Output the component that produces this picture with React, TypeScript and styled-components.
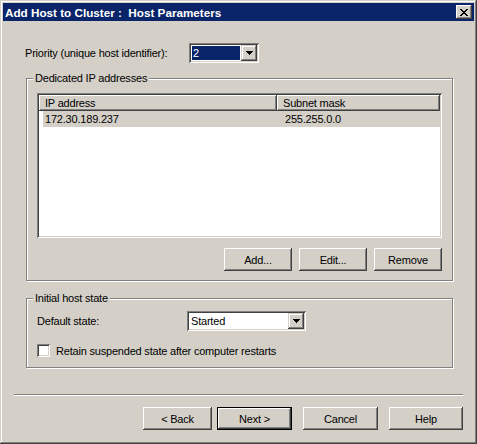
import React from "react";
import styled, { createGlobalStyle, css } from "styled-components";

const face = "#D4D0C8";

const GlobalStyle = createGlobalStyle`
  html, body { margin: 0; padding: 0; background: ${face}; }
  body { font-family: "Liberation Sans", Arial, sans-serif; font-size: 11px; }
`;

const raised = css`
  box-shadow: inset -1px -1px #404040, inset 1px 1px #ffffff, inset -2px -2px #808080, inset 2px 2px ${face};
`;
const arrowRaised = css`
  box-shadow: inset -1px -1px #404040, inset 1px 1px ${face}, inset -2px -2px #808080, inset 2px 2px #ffffff;
`;
const sunken = css`
  box-shadow: inset 1px 1px #808080, inset -1px -1px #ffffff, inset 2px 2px #404040, inset -2px -2px ${face};
`;

const Window = styled.div`
  width: 477px;
  height: 444px;
  box-sizing: border-box;
  padding: 3px;
  background: ${face};
  box-shadow: inset -1px -1px #404040, inset 1px 1px ${face}, inset -2px -2px #808080, inset 2px 2px #ffffff;
  display: flex;
  flex-direction: column;
  color: #000;
  font: 11px "Liberation Sans", Arial, sans-serif;
  letter-spacing: -0.2px;
`;

const TitleBar = styled.div`
  height: 18px;
  flex: none;
  background: #0a246a;
  color: #fff;
  display: flex;
  align-items: center;
  justify-content: space-between;
  padding: 0 2px;
  font-weight: bold;
  font-size: 11.7px;
  letter-spacing: 0;
`;

const TitleText = styled.span`
  white-space: pre;
`;

const CloseButton = styled.div`
  width: 16px;
  height: 14px;
  background: ${face};
  ${raised};
  display: flex;
  align-items: center;
  justify-content: center;
  padding-right: 1px;
  box-sizing: border-box;
`;

const Content = styled.div`
  flex: 1;
  display: flex;
  flex-direction: column;
  padding: 0 11px;
`;

const Row = styled.div<{ $top: number; $indent?: number }>`
  display: flex;
  align-items: center;
  height: 20px;
  margin-top: ${(p) => p.$top}px;
  margin-left: ${(p) => p.$indent ?? 0}px;
`;

const Label = styled.span<{ $width: number }>`
  width: ${(p) => p.$width}px;
  flex: none;
  white-space: nowrap;
`;

const Combo = styled.div<{ $width: number }>`
  width: ${(p) => p.$width}px;
  height: 20px;
  box-sizing: border-box;
  padding: 2px;
  background: #fff;
  ${sunken};
  display: flex;
`;

const ComboField = styled.div<{ $selected?: boolean }>`
  flex: 1;
  margin: 1px;
  padding-left: 1px;
  display: flex;
  align-items: center;
  background: ${(p) => (p.$selected ? "#0a246a" : "#fff")};
  color: ${(p) => (p.$selected ? "#fff" : "#000")};
`;

const ComboArrow = styled.div`
  width: 16px;
  height: 16px;
  background: ${face};
  ${arrowRaised};
  display: flex;
  align-items: center;
  justify-content: center;
`;

const GroupBox = styled.div<{ $top: number; $pad: string }>`
  position: relative;
  margin: ${(p) => p.$top}px 10px 0 12px;
  border: 1px solid #808080;
  box-shadow: inset 1px 1px #ffffff, 1px 1px #ffffff;
  padding: ${(p) => p.$pad};
  display: flex;
  flex-direction: column;
`;

const Legend = styled.span`
  position: absolute;
  top: -7px;
  left: 6px;
  padding: 0 2px;
  line-height: 13px;
  background: ${face};
  white-space: nowrap;
`;

const ListView = styled.div`
  height: 145px;
  box-sizing: border-box;
  padding: 2px;
  background: #fff;
  ${sunken};
  display: flex;
  flex-direction: column;
`;

const HeaderRow = styled.div`
  display: grid;
  grid-template-columns: 238px 1fr;
  height: 16px;
`;

const HeaderCell = styled.div`
  background: ${face};
  ${raised};
  padding-left: 6px;
  display: flex;
  align-items: center;
  white-space: nowrap;
`;

const ItemRow = styled.div<{ $selected?: boolean }>`
  display: grid;
  grid-template-columns: 234px 1fr;
  height: 16px;
  margin-left: 4px;
  background: ${(p) => (p.$selected ? face : "transparent")};
`;

const ItemCell = styled.div<{ $pad: number }>`
  padding-left: ${(p) => p.$pad}px;
  display: flex;
  align-items: center;
  white-space: nowrap;
`;

const ButtonRow = styled.div<{ $top: number; $gap: number }>`
  display: flex;
  justify-content: flex-end;
  gap: ${(p) => p.$gap}px;
  margin-top: ${(p) => p.$top}px;
`;

const Button = styled.div<{ $width: number; $default?: boolean; $gapAfter?: number }>`
  width: ${(p) => p.$width}px;
  height: 23px;
  box-sizing: border-box;
  background: ${face};
  display: flex;
  align-items: center;
  justify-content: center;
  white-space: nowrap;
  margin-right: ${(p) => p.$gapAfter ?? 0}px;
  ${(p) =>
    p.$default
      ? css`
          box-shadow: inset 0 0 0 1px #000, inset -2px -2px #404040, inset 2px 2px #ffffff, inset -3px -3px #808080;
        `
      : raised};
`;

const CheckRow = styled.div`
  display: flex;
  align-items: center;
  gap: 6px;
  margin-top: 13px;
  height: 13px;
`;

const CheckBox = styled.div`
  width: 13px;
  height: 13px;
  box-sizing: border-box;
  background: #fff;
  ${sunken};
`;

const Separator = styled.div`
  height: 0;
  border-top: 1px solid #808080;
  border-bottom: 1px solid #ffffff;
  margin-top: 26px;
`;

const DownArrow = () => (
  <svg width="7" height="4" viewBox="0 0 7 4" shapeRendering="crispEdges">
    <path d="M0 0h7v1H0zM1 1h5v1H1zM2 2h3v1H2zM3 3h1v1H3z" fill="#000" />
  </svg>
);

const CloseGlyph = () => (
  <svg width="8" height="7" viewBox="0 0 8 7" shapeRendering="crispEdges">
    <path
      d="M0 0h2v1H0zM6 0h2v1H6zM1 1h2v1H1zM5 1h2v1H5zM2 2h4v1H2zM3 3h2v1H3zM2 4h4v1H2zM1 5h2v1H1zM5 5h2v1H5zM0 6h2v1H0zM6 6h2v1H6z"
      fill="#000"
    />
  </svg>
);

export default function App() {
  return (
    <>
      <GlobalStyle />
      <Window>
        <TitleBar>
          <TitleText>Add Host to Cluster :  Host Parameters</TitleText>
          <CloseButton>
            <CloseGlyph />
          </CloseButton>
        </TitleBar>
        <Content>
          <Row $top={22} $indent={11}>
            <Label $width={164}>Priority (unique host identifier):</Label>
            <Combo $width={70}>
              <ComboField $selected>2</ComboField>
              <ComboArrow>
                <DownArrow />
              </ComboArrow>
            </Combo>
          </Row>

          <GroupBox $top={15} $pad="14px 10px 9px 10px">
            <Legend>Dedicated IP addresses</Legend>
            <ListView>
              <HeaderRow>
                <HeaderCell>IP address</HeaderCell>
                <HeaderCell>Subnet mask</HeaderCell>
              </HeaderRow>
              <ItemRow $selected>
                <ItemCell $pad={2}>172.30.189.237</ItemCell>
                <ItemCell $pad={8}>255.255.0.0</ItemCell>
              </ItemRow>
            </ListView>
            <ButtonRow $top={10} $gap={7}>
              <Button $width={68}>Add...</Button>
              <Button $width={68}>Edit...</Button>
              <Button $width={68}>Remove</Button>
            </ButtonRow>
          </GroupBox>

          <GroupBox $top={17} $pad="12px 10px 10px 10px">
            <Legend>Initial host state</Legend>
            <Row $top={0}>
              <Label $width={150}>Default state:</Label>
              <Combo $width={119}>
                <ComboField>Started</ComboField>
                <ComboArrow>
                  <DownArrow />
                </ComboArrow>
              </Combo>
            </Row>
            <CheckRow>
              <CheckBox />
              <span>Retain suspended state after computer restarts</span>
            </CheckRow>
          </GroupBox>

          <Separator />

          <ButtonRow $top={11} $gap={11}>
            <Button $width={69} $gapAfter={-6}>&lt; Back</Button>
            <Button $width={75} $default>Next &gt;</Button>
            <Button $width={75}>Cancel</Button>
            <Button $width={74}>Help</Button>
          </ButtonRow>
        </Content>
      </Window>
    </>
  );
}
